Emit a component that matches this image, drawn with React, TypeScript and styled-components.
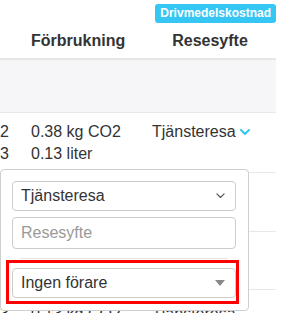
import React from "react";
import styled, { createGlobalStyle } from "styled-components";

const GlobalStyle = createGlobalStyle`
  html, body { margin: 0; padding: 0; background: #fff; }
  body {
    font-family: "Liberation Sans", Arial, sans-serif;
    color: #333;
    font-size: 16px;
  }
  * { box-sizing: border-box; }
`;

const Page = styled.div`
  position: relative;
  width: 292px;
  height: 313px;
  overflow: hidden;
`;

const BadgeBar = styled.div`
  display: flex;
  justify-content: flex-end;
  width: 276px;
  padding-top: 4px;
`;

const Badge = styled.span`
  background: #36c6f4;
  color: #fff;
  font-weight: bold;
  font-size: 12px;
  line-height: 15px;
  padding: 2px 5px;
  border-radius: 3px;
`;

const Table = styled.div`
  width: 276px;
`;

const Row = styled.div<{ $bg?: string; $h?: number; $border?: string }>`
  display: grid;
  grid-template-columns: 23px 121px 132px;
  background: ${(p) => p.$bg || "transparent"};
  min-height: ${(p) => (p.$h ? `${p.$h}px` : "auto")};
  border-bottom: ${(p) => p.$border || "1px solid #e8e8e8"};
`;

const HeadCell = styled.div<{ $center?: boolean }>`
  font-weight: bold;
  font-size: 16px;
  height: 35px;
  display: flex;
  align-items: center;
  justify-content: ${(p) => (p.$center ? "center" : "flex-start")};
  padding: 0 8px;
`;

const Cell = styled.div<{ $pl?: number; $pt?: number }>`
  padding: ${(p) => p.$pt ?? 8}px 0 7px ${(p) => p.$pl ?? 8}px;
  line-height: 22px;
  white-space: nowrap;
`;

const Purpose = styled.span`
  display: inline-flex;
  align-items: center;
  gap: 4px;
`;

const Popover = styled.div`
  position: absolute;
  left: 0;
  top: 169px;
  width: 249px;
  height: 142px;
  background: #fff;
  border: 1px solid #cfcfcf;
  border-radius: 4px;
  padding: 11px 12px 0 11px;
  display: flex;
  flex-direction: column;
`;

const SelectBox = styled.div<{ $h: number }>`
  height: ${(p) => p.$h}px;
  border: 1px solid #ccc;
  border-radius: 4px;
  display: flex;
  align-items: center;
  justify-content: space-between;
  padding: 0 10px 0 8px;
  font-size: 16px;
  color: #333;
  background: #fff;
`;

const Placeholder = styled.div`
  height: 32px;
  margin-top: 6px;
  border: 1px solid #ccc;
  border-radius: 4px;
  display: flex;
  align-items: center;
  padding: 0 8px;
  font-size: 16px;
  color: #999;
`;

const Divider = styled.div`
  height: 1px;
  background: #e5e5e5;
  margin: 9px 8px 0 8px;
`;

const Highlight = styled.div`
  margin: 1px -3px 0 -6px;
  border: 3px solid #f00;
  padding: 5px 0 3px 3px;
`;

const Caret = styled.span`
  width: 0;
  height: 0;
  border-left: 5px solid transparent;
  border-right: 5px solid transparent;
  border-top: 6px solid #888;
`;

const ChevronDown = ({ color, w, sw }: { color: string; w: number; sw: number }) => (
  <svg width={w} height={w * 0.6} viewBox="0 0 10 6" fill="none">
    <path d="M1 1 L5 5 L9 1" stroke={color} strokeWidth={sw} strokeLinecap="round" strokeLinejoin="round" />
  </svg>
);

export default function App() {
  return (
    <>
      <GlobalStyle />
      <Page>
        <BadgeBar>
          <Badge>Drivmedelskostnad</Badge>
        </BadgeBar>
        <Table>
          <Row $border="2px solid #e6e6e6">
            <HeadCell />
            <HeadCell>Förbrukning</HeadCell>
            <HeadCell $center>Resesyfte</HeadCell>
          </Row>
          <Row $bg="#f6f6f8" $h={53} />
          <Row>
            <Cell $pl={0}>
              2<br />3
            </Cell>
            <Cell>
              0.38 kg CO2
              <br />
              0.13 liter
            </Cell>
            <Cell>
              <Purpose>
                Tjänsteresa
                <ChevronDown color="#36c6f4" w={10} sw={2} />
              </Purpose>
            </Cell>
          </Row>
          <Row $h={59} />
          <Row $h={58} />
          <Row>
            <Cell $pl={0} $pt={13}>
              3
            </Cell>
            <Cell $pt={13}>0.13 kg CO2</Cell>
            <Cell $pt={13}>Tjänsteresa</Cell>
          </Row>
        </Table>
        <Popover>
          <SelectBox $h={30}>
            Tjänsteresa
            <ChevronDown color="#555" w={9} sw={1.3} />
          </SelectBox>
          <Placeholder>Resesyfte</Placeholder>
          <Divider />
          <Highlight>
            <SelectBox $h={30}>
              Ingen förare
              <Caret />
            </SelectBox>
          </Highlight>
        </Popover>
      </Page>
    </>
  );
}
